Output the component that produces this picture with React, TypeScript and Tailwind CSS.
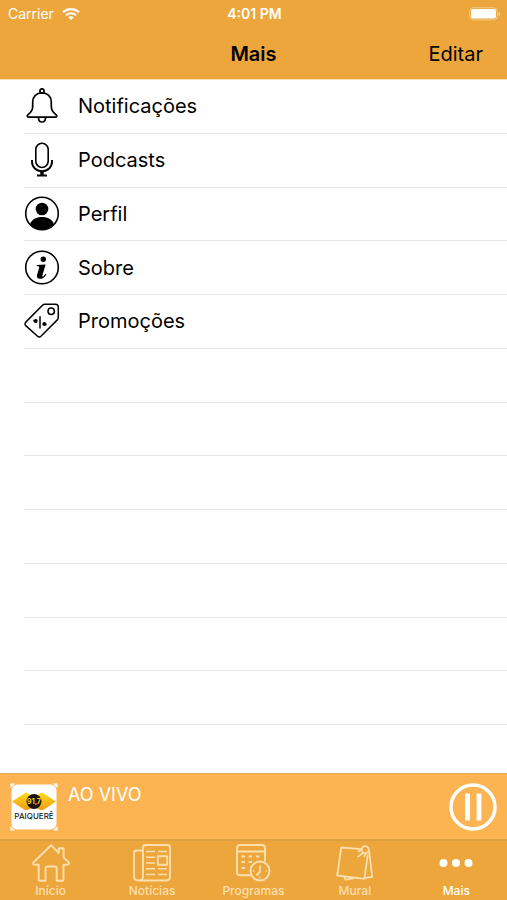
import type { ReactNode } from "react";

function BellIcon() {
  return (
    <svg className="size-9" viewBox="0 0 36 36" fill="none" stroke="#000" strokeWidth="1.700" strokeLinejoin="round" aria-hidden="true">
      <circle cx="18" cy="2.900" r="2.100" />
      <path d="M18 4.800c-5.500 0-9.300 3.700-9.300 9.200v4.500c0 4-2 6.200-4.600 8.100-1.500 1.300-1 2.600.5 2.600h26.800c1.500 0 2-1.300.5-2.600-2.600-1.900-4.600-4.100-4.600-8.100V14c0-5.500-3.800-9.200-9.300-9.200z" />
      <path d="M14.500 29.700c0 2.600 1.500 4.300 3.500 4.300s3.500-1.700 3.500-4.300" />
    </svg>
  );
}

function MicIcon() {
  return (
    <svg className="size-9" viewBox="0 0 36 36" fill="none" stroke="#000" strokeWidth="1.600" aria-hidden="true">
      <rect x="11.800" y="1.300" width="12.400" height="24.200" rx="6.200" />
      <path d="M8 18v1.500c0 5.700 4.200 9.700 10 9.700s10-4 10-9.700V18" strokeWidth="1.900" />
      <path d="M18 29.500v4" strokeWidth="3.500" />
      <path d="M13 33.500h10" strokeWidth="2" />
    </svg>
  );
}

function ProfileIcon() {
  return (
    <svg className="size-9" viewBox="0 0 36 36" aria-hidden="true">
      <circle cx="18" cy="17.500" r="16.300" fill="none" stroke="#000" strokeWidth="1.600" />
      <circle cx="18" cy="13" r="6.300" />
      <path d="M6.200 28c1.500-4.700 6-7 11.800-7s10.300 2.300 11.800 7c-3 3.600-7.200 5.800-11.800 5.800S9.200 31.600 6.200 28z" />
    </svg>
  );
}

function InfoIcon() {
  return (
    <svg className="size-9" viewBox="0 0 36 36" aria-hidden="true">
      <circle cx="18" cy="17.500" r="16.300" fill="none" stroke="#000" strokeWidth="1.600" />
      <circle cx="19.300" cy="9.200" r="2.700" />
      <path d="M12.800 15l8.800-.6-3.200 11c-.3 1.200.3 1.300 1 .8.800-.6 1.500-1.500 2.200-2.400l.8.600c-1.900 3.100-3.900 4.400-6.200 4.400-2.700 0-3.800-1.500-3.200-3.700l2.200-7.300c.3-1.300-.2-1.700-2.400-1.800z" />
    </svg>
  );
}

function TagIcon() {
  return (
    <svg className="size-9" viewBox="0 0 36 36" fill="none" stroke="#000" strokeWidth="1.500" strokeLinejoin="round" aria-hidden="true">
      <path d="M21 1.200h10.500c1.700 0 2.800 1.100 2.800 2.800v10.500c0 1-.3 1.700-1 2.400L17.200 33c-1.300 1.200-2.700 1.200-3.900 0L2 22.900c-1.300-1.200-1.300-2.800 0-4L18.500 2.200c.7-.7 1.500-1 2.500-1z" />
      <circle cx="27.200" cy="8.300" r="3.200" />
      <path d="M16 13.300v12.300" />
      <circle cx="11.700" cy="18" r="2" fill="#000" stroke="none" />
      <circle cx="20.300" cy="21" r="2" fill="#000" stroke="none" />
      <path d="M9.300 17.400l2 .6M20.300 21l2.300.7" />
    </svg>
  );
}

function HomeIcon() {
  return (
    <svg className="h-10 w-10" viewBox="0 0 40 40" fill="none" stroke="currentColor" strokeWidth="1.900" strokeLinejoin="round" aria-hidden="true">
      <path d="M20 2.200L2.400 19.500c-.7 1.300 0 2.200 1.300 2.200h4v15c0 .7.400 1 1 1h5.800V25.500c0-1.300.8-2 2-2h7.200c1.300 0 2 .7 2 2v12.200h5.800c.7 0 1-.4 1-1v-15h4c1.300 0 2-.9 1.300-2.200L32.600 14.500V5.200h-4.800V10z" />
    </svg>
  );
}

function NewsIcon() {
  return (
    <svg className="h-10 w-10" viewBox="0 0 40 40" fill="none" stroke="currentColor" strokeWidth="1.900" strokeLinejoin="round" aria-hidden="true">
      <path d="M11 33.500V4.500c0-1.600 1-2.500 2.500-2.500h22c1.600 0 2.500 1 2.500 2.500v29c0 2.500-1.500 4-4 4H6c-2.500 0-4-1.500-4-4V10c0-1.700 1-2.500 2.500-2.500H10" />
      <path d="M11 33c0 2.500-1.200 4.500-3.500 4.500" />
      <path d="M14 8.500h9M14 14.200h9M14 20h9M14 25.800h9M14 31.500h9M26 8.500h9M26 25.800h9M26 31.500h9" strokeWidth="1.600" />
      <rect x="25.800" y="13.200" width="9.400" height="8.600" />
    </svg>
  );
}

function CalendarIcon() {
  return (
    <svg className="h-10 w-10" viewBox="0 0 40 40" fill="none" stroke="currentColor" strokeWidth="1.900" strokeLinejoin="round" aria-hidden="true">
      <path d="M18 32.300H7c-2 0-3-1-3-3V5c0-2 1-3 3-3h22c2 0 3 1 3 3v13.500M4 8.500h28" />
      <path d="M8.500 13.500H12M15.500 13.500H19M23 13.500h3.500M8.500 19H12M15.500 19H19M8.500 25H12" strokeWidth="1.800" />
      <circle cx="27" cy="28" r="9.500" />
      <path d="M27 22.500v6l-3.500 4" />
      <path d="M19.500 28h2M32.500 28h2M27 33.500v2" strokeWidth="1.200" />
    </svg>
  );
}

function NotesIcon() {
  return (
    <svg className="h-10 w-10" viewBox="0 0 40 40" fill="none" stroke="currentColor" strokeWidth="1.800" strokeLinejoin="round" strokeLinecap="round" aria-hidden="true">
      <path d="M26 6.200L6.200 4.500 2.200 32.500l27.200 3.300 3.300-23.500" />
      <path d="M9.500 34.200l.8 2.500 8-1.300M34 7.500l3.200 26.300-6.800 1" />
      <circle cx="30.200" cy="6.700" r="3.500" />
      <path d="M28.500 9.800l-5.300 3.700M23.500 8.500l3-1.500M30.500 10.500l-1 3" />
    </svg>
  );
}

function MoreIcon() {
  return (
    <svg className="h-10 w-10" viewBox="0 0 40 40" fill="currentColor" aria-hidden="true">
      <circle cx="7.500" cy="20" r="4" />
      <circle cx="20" cy="20" r="4" />
      <circle cx="32.500" cy="20" r="4" />
    </svg>
  );
}

function WifiIcon() {
  return (
    <svg className="h-3 w-[18px]" viewBox="0 0 18 12" fill="none" stroke="#fff" strokeWidth="2.200" aria-label="Wi-Fi">
      <path d="M1 4.300c4.600-4.200 11.400-4.200 16 0M4 7.300c2.900-2.600 7.100-2.600 10 0" />
      <path d="M9 12L6.200 9.300c1.600-1.500 4-1.500 5.600 0z" fill="#fff" stroke="none" />
    </svg>
  );
}

function BatteryIcon() {
  return (
    <svg className="h-[14px] w-8" viewBox="0 0 32 14" aria-label="Battery">
      <rect x=".7" y=".7" width="27.600" height="12.200" rx="3.500" fill="none" stroke="#fff" strokeOpacity=".4" />
      <rect x="2" y="2" width="25" height="9.600" rx="2" fill="#fff" />
      <path d="M29.500 5v4c1.200-.4 1.800-1.100 1.800-2s-.6-1.600-1.800-2z" fill="#fff" fillOpacity=".45" />
    </svg>
  );
}

function StationLogo() {
  return (
    <svg className="size-12" viewBox="0 0 48 48" role="img" aria-label="Paiquerê 91,7">
      <defs>
        <linearGradient id="wing" x1="0" y1="0" x2="0" y2="1">
          <stop offset="0" stopColor="#ffdc1c" />
          <stop offset="1" stopColor="#ee9a13" />
        </linearGradient>
      </defs>
      <path d="M.5.500h4.500L.5 5zM47.500.500V5L43 .5zM.5 47.500V43L5 47.500zM47.500 47.500H43l4.500-4.500z" fill="#fff" />
      <rect x="1.500" y="1.500" width="45" height="45" rx="6" fill="#fff" />
      <path d="M2 18.500L14 10.500c2-1.200 3.500-.5 5 .5l5 2.500 5-2.500c1.500-1 3-1.700 5-.5l12 8L34 26.500c-2 1.200-3.500.8-5-.2l-5-2.500-5 2.500c-1.500 1-3 1.400-5 .2z" fill="url(#wing)" />
      <circle cx="24" cy="18.500" r="7.500" fill="#17150d" />
      <text x="24" y="21" textAnchor="middle" fontSize="7" fontWeight="700" fontFamily="Inter, sans-serif" fill="#f5cf22">91,7</text>
      <text x="24" y="36" textAnchor="middle" fontSize="8" fontWeight="500" fontFamily="Inter, sans-serif" fill="#222">PAIQUERÊ</text>
    </svg>
  );
}

function PauseIcon() {
  return (
    <svg className="size-12" viewBox="0 0 48 48" fill="none" stroke="#fff" aria-hidden="true">
      <circle cx="24" cy="24" r="22" strokeWidth="3.500" />
      <path d="M18.500 10.500v27M30 10.500v27" strokeWidth="4.800" />
    </svg>
  );
}

const items: { label: string; icon: ReactNode }[] = [
  { label: "Notificações", icon: <BellIcon /> },
  { label: "Podcasts", icon: <MicIcon /> },
  { label: "Perfil", icon: <ProfileIcon /> },
  { label: "Sobre", icon: <InfoIcon /> },
  { label: "Promoções", icon: <TagIcon /> },
];

const emptyRows = [1, 2, 3, 4, 5, 6, 7];

const tabs: { label: string; icon: ReactNode; active?: boolean }[] = [
  { label: "Início", icon: <HomeIcon /> },
  { label: "Notícias", icon: <NewsIcon /> },
  { label: "Programas", icon: <CalendarIcon /> },
  { label: "Mural", icon: <NotesIcon /> },
  { label: "Mais", icon: <MoreIcon />, active: true },
];

export default function App() {
  return (
    <div className="flex min-h-screen flex-col bg-white font-['Inter',sans-serif] text-black">
      <header className="border-b border-[#fae0b4] bg-[#eda63c]">
        <div className="grid h-7 grid-cols-3 items-center pr-[6px] pl-2 text-white">
          <div className="flex items-center gap-2 text-sm">
            <span>Carrier</span>
            <WifiIcon />
          </div>
          <span className="text-center text-sm font-semibold">4:01 PM</span>
          <div className="flex justify-end">
            <BatteryIcon />
          </div>
        </div>
        <div className="grid h-[51px] grid-cols-3 items-center px-6 text-xl">
          <h1 className="col-start-2 text-center font-semibold">Mais</h1>
          <button type="button" className="justify-self-end">Editar</button>
        </div>
      </header>

      <main className="flex-1">
        <ul className="grid h-[645px] grid-rows-12 pl-6">
          {items.map((item) => (
            <li key={item.label} className="border-b border-[#e6e6e6]">
              <button type="button" className="flex h-full w-full items-center gap-[18px] text-left text-xl">
                {item.icon}
                <span>{item.label}</span>
              </button>
            </li>
          ))}
          {emptyRows.map((row) => (
            <li key={row} aria-hidden="true" className="border-b border-[#e6e6e6]" />
          ))}
        </ul>
      </main>

      <section className="flex h-[66px] items-center justify-between border-t border-[#dfa75a] bg-[#fbb451] px-[10px] text-white">
        <div className="flex items-start gap-[10px]">
          <StationLogo />
          <span className="text-lg leading-6">AO VIVO</span>
        </div>
        <button type="button" aria-label="Pausar">
          <PauseIcon />
        </button>
      </section>

      <nav className="grid h-[61px] grid-cols-5 border-t-2 border-[#dc9f42] bg-[#eda63c]">
        {tabs.map((tab) => (
          <a
            key={tab.label}
            href="#"
            aria-current={tab.active ? "page" : undefined}
            className={
              tab.active
                ? "flex flex-col items-center pt-[2px] text-xs font-medium text-white"
                : "flex flex-col items-center pt-[2px] text-xs font-medium text-[#fbdfae]"
            }
          >
            {tab.icon}
            <span>{tab.label}</span>
          </a>
        ))}
      </nav>
    </div>
  );
}
